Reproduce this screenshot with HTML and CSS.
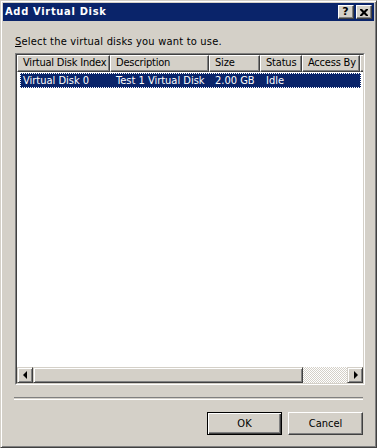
FILE: index.html
```html
<!DOCTYPE html>
<html>
<head>
<meta charset="utf-8">
<link rel="stylesheet" href="styles.css">
</head>
<body>
<div class="window">
  <div class="titlebar">
    <span class="title">Add Virtual Disk</span>
    <div class="tbtns">
      <div class="tbtn help">?</div>
      <div class="tbtn close">
        <svg width="8" height="7" viewBox="0 0 8 7"><path d="M0 0h2l2 2l2-2h2v1l-2.5 2.5L8 6v1H6L4 5L2 7H0V6l2.5-2.5L0 1z" fill="#000"/></svg>
      </div>
    </div>
  </div>
  <div class="content">
    <div class="label"><u>S</u>elect the virtual disks you want to use.</div>
    <div class="list">
      <div class="list-inner">
        <div class="header">
          <div class="hcol c1">Virtual Disk Index</div>
          <div class="hcol c2">Description</div>
          <div class="hcol c3">Size</div>
          <div class="hcol c4">Status</div>
          <div class="hcol c5">Access By</div>
          <div class="hfill"></div>
        </div>
        <div class="rows">
          <div class="row selected">
            <div class="cell c1">Virtual Disk 0</div>
            <div class="cell c2">Test 1 Virtual Disk</div>
            <div class="cell c3">2.00 GB</div>
            <div class="cell c4">Idle</div>
            <div class="cell c5"></div>
          </div>
        </div>
        <div class="hscroll">
          <div class="sbtn"><span class="arrow left"></span></div>
          <div class="thumb"></div>
          <div class="track"></div>
          <div class="sbtn"><span class="arrow right"></span></div>
        </div>
      </div>
    </div>
    <div class="sep"></div>
    <div class="buttons">
      <div class="btn default"><span>OK</span></div>
      <div class="btn"><span>Cancel</span></div>
    </div>
  </div>
</div>
</body>
</html>
```
FILE: styles.css
```css
html, body {
  margin: 0;
  padding: 0;
  background: #D4D0C8;
}
body {
  font: 11px "DejaVu Sans Condensed", "Liberation Sans", Arial, sans-serif;
  color: #000;
}
.window {
  width: 377px;
  height: 448px;
  box-sizing: border-box;
  background: #D4D0C8;
  border-top: 1px solid #D4D0C8;
  border-left: 1px solid #D4D0C8;
  border-right: 1px solid #404040;
  border-bottom: 1px solid #404040;
  box-shadow: inset 1px 1px 0 #fff, inset -1px -1px 0 #808080;
  padding: 2px;
  display: flex;
  flex-direction: column;
}
.titlebar {
  height: 18px;
  background: #0A246A;
  display: flex;
  align-items: center;
  justify-content: space-between;
  padding-left: 2px;
}
.title {
  color: #fff;
  font-weight: bold;
  font-size: 11px;
  line-height: 18px;
  letter-spacing: 0.7px;
}
.tbtns {
  display: flex;
  gap: 2px;
  margin-right: 2px;
}
.tbtn {
  width: 16px;
  height: 14px;
  box-sizing: border-box;
  background: #D4D0C8;
  border-top: 1px solid #fff;
  border-left: 1px solid #fff;
  border-right: 1px solid #404040;
  border-bottom: 1px solid #404040;
  box-shadow: inset -1px -1px 0 #808080;
  display: flex;
  align-items: center;
  justify-content: center;
}
.help {
  font-family: "DejaVu Sans", sans-serif;
  font-weight: bold;
  font-size: 11px;
  line-height: 12px;
  padding-right: 1px;
}
.close svg {
  display: block;
  margin-right: 1px;
}
.content {
  flex: 1;
  display: flex;
  flex-direction: column;
  padding: 0 8px 0 12px;
}
.label {
  margin-top: 14px;
  line-height: 13px;
  height: 13px;
  letter-spacing: 0.2px;
}
.list {
  margin-top: 5px;
  width: 350px;
  height: 332px;
  box-sizing: border-box;
  border-top: 1px solid #808080;
  border-left: 1px solid #808080;
  border-right: 1px solid #fff;
  border-bottom: 1px solid #fff;
}
.list-inner {
  height: 100%;
  box-sizing: border-box;
  border-top: 1px solid #404040;
  border-left: 1px solid #404040;
  border-right: 1px solid #D4D0C8;
  border-bottom: 1px solid #D4D0C8;
  background: #fff;
  display: flex;
  flex-direction: column;
}
.header {
  display: flex;
  height: 17px;
  background: #D4D0C8;
}
.hcol {
  height: 17px;
  box-sizing: border-box;
  border-top: 1px solid #fff;
  border-left: 1px solid #fff;
  border-right: 1px solid #404040;
  border-bottom: 1px solid #404040;
  box-shadow: inset -1px -1px 0 #808080;
  padding-left: 5px;
  line-height: 14px;
  white-space: nowrap;
  overflow: hidden;
  letter-spacing: -0.2px;
}
.c1 { width: 93px; }
.c2 { width: 99px; }
.c3 { width: 51px; }
.c4 { width: 42px; }
.c5 { width: 58px; }
.hfill {
  flex: 1;
  border-top: 1px solid #fff;
  border-left: 1px solid #fff;
  border-bottom: 1px solid #404040;
  box-shadow: inset 0 -1px 0 #808080;
}
.rows {
  flex: 1;
}
.row {
  display: flex;
  height: 15px;
  margin-top: 1px;
}
.row.selected {
  background: #0A246A;
  color: #fff;
  margin-left: 3px;
  width: 341px;
  outline: 1px dotted #fff;
  outline-offset: -1px;
}
.cell {
  box-sizing: border-box;
  line-height: 15px;
  padding-left: 6px;
  white-space: nowrap;
}
.row .c1 { width: 90px; padding-left: 3px; }
.hscroll {
  height: 16px;
  display: flex;
}
.sbtn {
  width: 16px;
  height: 16px;
  box-sizing: border-box;
  background: #D4D0C8;
  border-top: 1px solid #D4D0C8;
  border-left: 1px solid #D4D0C8;
  border-right: 1px solid #404040;
  border-bottom: 1px solid #404040;
  box-shadow: inset 1px 1px 0 #fff, inset -1px -1px 0 #808080;
  display: flex;
  align-items: center;
  justify-content: center;
}
.arrow {
  width: 0;
  height: 0;
  border-top: 4px solid transparent;
  border-bottom: 4px solid transparent;
}
.arrow.left { border-right: 4px solid #000; margin-right: 1px; }
.arrow.right { border-left: 4px solid #000; margin-left: 1px; }
.thumb {
  width: 270px;
  height: 16px;
  box-sizing: border-box;
  background: #D4D0C8;
  border-top: 1px solid #D4D0C8;
  border-left: 1px solid #D4D0C8;
  border-right: 1px solid #404040;
  border-bottom: 1px solid #404040;
  box-shadow: inset 1px 1px 0 #fff, inset -1px -1px 0 #808080;
}
.track {
  flex: 1;
  background: repeating-conic-gradient(#fff 0 25%, #D4D0C8 0 50%) 0 0 / 2px 2px;
}
.sep {
  margin-top: 12px;
  width: 349px;
  margin-left: -1px;
  height: 1px;
  border-top: 1px solid #808080;
  border-bottom: 1px solid #fff;
}
.buttons {
  margin-top: 12px;
  display: flex;
  justify-content: flex-end;
  gap: 6px;
  width: 348px;
}
.btn {
  width: 75px;
  height: 23px;
  box-sizing: border-box;
  background: #D4D0C8;
  border-top: 1px solid #fff;
  border-left: 1px solid #fff;
  border-right: 1px solid #404040;
  border-bottom: 1px solid #404040;
  box-shadow: inset -1px -1px 0 #808080;
  display: flex;
  align-items: center;
  justify-content: center;
  line-height: 13px;
}
.btn.default {
  border: 1px solid #000;
  box-shadow: inset 1px 1px 0 #fff, inset -1px -1px 0 #404040, inset -2px -2px 0 #808080;
}
```
